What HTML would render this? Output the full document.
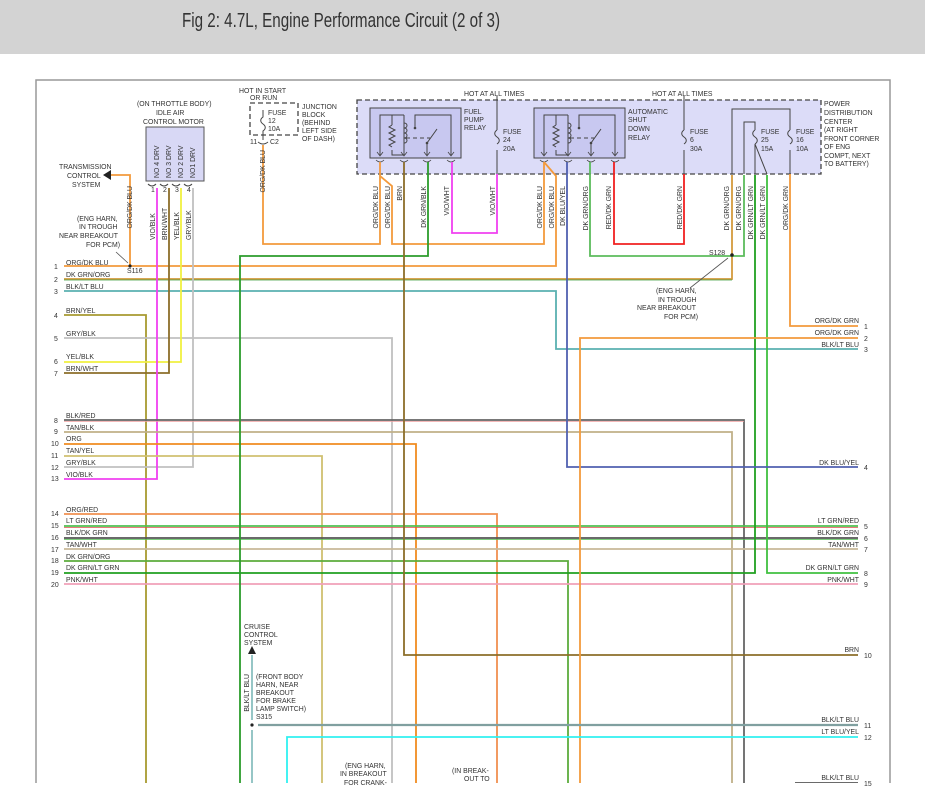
<!DOCTYPE html>
<html><head><meta charset="utf-8"><style>
html,body{margin:0;padding:0;background:#fff;}
body{width:925px;height:812px;overflow:hidden;position:relative;font-family:"Liberation Sans",sans-serif;}
.hdr{position:absolute;left:0;top:0;width:925px;height:54px;background:#d3d3d3;}
svg{position:absolute;left:0;top:0;}
text{font-family:"Liberation Sans",sans-serif;font-size:6.9px;fill:#333;}
</style></head><body>
<div class="hdr"></div>
<svg width="925" height="812" viewBox="0 0 925 812">
<text x="182" y="27" textLength="318" lengthAdjust="spacingAndGlyphs" style="font-size:20px;fill:#333">Fig 2: 4.7L, Engine Performance Circuit (2 of 3)</text>
<defs>
<clipPath id="c"><rect x="0" y="0" width="925" height="783"/></clipPath>
<g id="relay">
<rect x="370" y="108" width="91" height="50" fill="#c8c8f0" stroke="#444" stroke-width="1"/>
<path d="M380 155V115H404M392 115V125M392 150V155H404M404 115V155M415 128V115H451V155" fill="none" stroke="#444" stroke-width="1"/>
<path d="M392 125l-3 2 6 3-6 3 6 3-6 3 6 3-6 3 3 2" fill="none" stroke="#444" stroke-width="1"/>
<path d="M404 123c4 0 4 5 0 5c4 0 4 5 0 5c4 0 4 5 0 5c4 0 4 5 0 5" fill="none" stroke="#444" stroke-width="1"/>
<path d="M406 138H430" stroke="#444" stroke-width="1" stroke-dasharray="4,3"/>
<path d="M427 155V143L437 129" fill="none" stroke="#444" stroke-width="1"/>
<circle cx="415" cy="128" r="1.3" fill="#444"/><circle cx="427" cy="143" r="1.3" fill="#444"/>
<path d="M377 152l3 4 3-4M401 152l3 4 3-4M424 152l3 4 3-4M448 152l3 4 3-4" fill="none" stroke="#444" stroke-width="0.8"/>
<path d="M376 160q4 4 8 0M400 160q4 4 8 0M423 160q4 4 8 0M447 160q4 4 8 0" fill="none" stroke="#444" stroke-width="0.8"/>
</g>
</defs>
<path d="M36 783V80H890V783" fill="none" stroke="#999" stroke-width="1.5"/>
<rect x="357" y="100" width="464" height="74" fill="#dcdcf8" stroke="#444" stroke-width="1.3" stroke-dasharray="5,3"/>
<rect x="250" y="103" width="48" height="32" fill="#fff" stroke="#444" stroke-width="1.3" stroke-dasharray="5,3"/>
<rect x="146" y="127" width="58" height="54" fill="#d8d8f5" stroke="#555" stroke-width="1"/>
<use href="#relay"/>
<use href="#relay" transform="translate(164,0)"/>
<g fill="none" stroke="#444" stroke-width="1">
<path d="M497 96V130M497 150V174M497 130c-3 2-3 5 0 7c3 2 3 5 0 7"/>
<path d="M684 96V130M684 150V174M684 130c-3 2-3 5 0 7c3 2 3 5 0 7"/>
<path d="M732 174V109H790V130M790 150V174M790 130c-3 2-3 5 0 7c3 2 3 5 0 7"/>
<path d="M744 174V122H755V130M755 144L767 174M755 130c-3 2-3 5 0 7c3 2 3 5 0 7M755 144V174"/>
<path d="M263 110V117c-3 2-3 5 0 7c3 2 3 5 0 7V140"/>
<path d="M258 142q5 4 10 0"/>
<path d="M148 184q4 4 8 0M160 184q4 4 8 0M172 184q4 4 8 0M184 184q4 4 8 0"/>
</g>
<g clip-path="url(#c)" fill="none" stroke-width="1.8">
<path d="M64 266H556V176L544 162" stroke="#f39a3c"/>
<path d="M380 162V176M263 145V244H380V176" stroke="#f39a3c"/>
<path d="M380 176L392 186V244H544V162" stroke="#f39a3c"/>
<path d="M130 266V175H110" stroke="#f39a3c"/>
<path d="M64 279H732V175" stroke="#d49a3c"/>
<path d="M64 280H732" stroke="#3c9c3c" stroke-width="0.8"/>
<path d="M590 162V256H732M744 175V256H732" stroke="#5cbc5c"/>
<path d="M64 291H556V349H858" stroke="#5ab0b0"/>
<path d="M64 315H146V790" stroke="#a89a30"/>
<path d="M64 338H392V790" stroke="#c0c0c0"/>
<path d="M64 362H181V188" stroke="#f0f040"/>
<path d="M64 373H169V188" stroke="#8c6e2a"/>
<path d="M64 467H193V188" stroke="#c0c0c0"/>
<path d="M64 479H157V188" stroke="#f040f0"/>
<path d="M64 420H744V790" stroke="#666"/>
<path d="M64 421.5H744" stroke="#f0a0a0" stroke-width="0.8"/>
<path d="M64 432H732V790" stroke="#c0b088"/>
<path d="M64 444H416V790" stroke="#f08c20"/>
<path d="M64 456H322V790" stroke="#d0c070"/>
<path d="M64 514H497V790" stroke="#f09050"/>
<path d="M64 526H858" stroke="#50c050"/>
<path d="M64 527.5H858" stroke="#e05050" stroke-width="0.7"/>
<path d="M64 538H858" stroke="#555"/>
<path d="M64 539.5H858" stroke="#50c050" stroke-width="0.7"/>
<path d="M64 549H858" stroke="#c8b898"/>
<path d="M64 561H568V790" stroke="#5cac3c"/>
<path d="M64 573H755V175" stroke="#20a020"/>
<path d="M767 175V573H858" stroke="#40c040"/>
<path d="M64 584H858" stroke="#f0a0b8"/>
<path d="M428 162V256H240V790" stroke="#2c9c2c"/>
<path d="M404 162V655H858" stroke="#8c6e2a"/>
<path d="M452 162V233H497V174" stroke="#f040f0"/>
<path d="M567 162V467H858" stroke="#5060b0"/>
<path d="M614 162V244H684V174" stroke="#f02020"/>
<path d="M790 174V326H858" stroke="#f39a3c"/>
<path d="M580 790V338H858" stroke="#f39a3c"/>
<path d="M258 725H858" stroke="#80a0a0" stroke-width="2.2"/>
<path d="M252 655V720M252 730V790" stroke="#50a0a0" stroke-width="1.2"/>
<path d="M287 790V737H858" stroke="#30f0f0"/>
<path d="M795 783H858" stroke="#555"/>
</g>
<path d="M103 175l8-5v10z" fill="#222"/>
<path d="M252 646l-4 8h8z" fill="#222"/>
<circle cx="130" cy="266" r="1.6" fill="#222"/><circle cx="732" cy="255" r="1.8" fill="#222"/><circle cx="252" cy="725" r="1.6" fill="#222"/>
<path d="M116 252L128 263M690 288L728 258" stroke="#555" stroke-width="0.8"/>
<g>
<text x="137" y="106">(ON THROTTLE BODY)</text>
<text x="156" y="115">IDLE AIR</text>
<text x="143" y="124">CONTROL MOTOR</text>
<text x="239" y="93">HOT IN START</text>
<text x="250" y="100">OR RUN</text>
<text x="268" y="115">FUSE</text><text x="268" y="123">12</text><text x="268" y="131">10A</text>
<text x="250" y="144">11</text><text x="270" y="144">C2</text>
<text x="302" y="109">JUNCTION</text><text x="302" y="117">BLOCK</text><text x="302" y="125">(BEHIND</text><text x="302" y="133">LEFT SIDE</text><text x="302" y="141">OF DASH)</text>
<text x="59" y="169">TRANSMISSION</text><text x="67" y="178">CONTROL</text><text x="72" y="187">SYSTEM</text>
<text x="77" y="221">(ENG HARN,</text><text x="79" y="229">IN TROUGH</text><text x="59" y="238">NEAR BREAKOUT</text><text x="86" y="247">FOR PCM)</text>
<text x="127" y="273">S116</text>
<text x="464" y="96">HOT AT ALL TIMES</text>
<text x="652" y="96">HOT AT ALL TIMES</text>
<text x="464" y="114">FUEL</text><text x="464" y="122">PUMP</text><text x="464" y="130">RELAY</text>
<text x="628" y="114">AUTOMATIC</text><text x="628" y="122">SHUT</text><text x="628" y="131">DOWN</text><text x="628" y="140">RELAY</text>
<text x="503" y="134">FUSE</text><text x="503" y="142">24</text><text x="503" y="151">20A</text>
<text x="690" y="134">FUSE</text><text x="690" y="142">6</text><text x="690" y="151">30A</text>
<text x="761" y="134">FUSE</text><text x="761" y="142">25</text><text x="761" y="151">15A</text>
<text x="796" y="134">FUSE</text><text x="796" y="142">16</text><text x="796" y="151">10A</text>
<text x="824" y="106">POWER</text><text x="824" y="115">DISTRIBUTION</text><text x="824" y="124">CENTER</text><text x="824" y="132">(AT RIGHT</text><text x="824" y="141">FRONT CORNER</text><text x="824" y="149">OF ENG</text><text x="824" y="158">COMPT, NEXT</text><text x="824" y="166">TO BATTERY)</text>
<text x="709" y="255">S128</text>
<text x="656" y="293">(ENG HARN,</text><text x="658" y="302">IN TROUGH</text><text x="637" y="310">NEAR BREAKOUT</text><text x="664" y="319">FOR PCM)</text>
<text x="244" y="629">CRUISE</text><text x="244" y="637">CONTROL</text><text x="244" y="645">SYSTEM</text>
<text x="256" y="679">(FRONT BODY</text><text x="256" y="687">HARN, NEAR</text><text x="256" y="695">BREAKOUT</text><text x="256" y="703">FOR BRAKE</text><text x="256" y="711">LAMP SWITCH)</text><text x="256" y="719">S315</text>
<text x="345" y="768">(ENG HARN,</text><text x="340" y="776">IN BREAKOUT</text><text x="344" y="785">FOR CRANK-</text>
<text x="452" y="773">(IN BREAK-</text><text x="464" y="781">OUT TO</text>
<text x="151" y="192">1</text><text x="163" y="192">2</text><text x="175" y="192">3</text><text x="187" y="192">4</text>
</g>
<g>
<text x="54" y="269">1</text><text x="66" y="265">ORG/DK BLU</text>
<text x="54" y="282">2</text><text x="66" y="277">DK GRN/ORG</text>
<text x="54" y="294">3</text><text x="66" y="289">BLK/LT BLU</text>
<text x="54" y="318">4</text><text x="66" y="313">BRN/YEL</text>
<text x="54" y="341">5</text><text x="66" y="336">GRY/BLK</text>
<text x="54" y="364">6</text><text x="66" y="359">YEL/BLK</text>
<text x="54" y="376">7</text><text x="66" y="371">BRN/WHT</text>
<text x="54" y="423">8</text><text x="66" y="418">BLK/RED</text>
<text x="54" y="434">9</text><text x="66" y="430">TAN/BLK</text>
<text x="51" y="446">10</text><text x="66" y="441">ORG</text>
<text x="51" y="458">11</text><text x="66" y="453">TAN/YEL</text>
<text x="51" y="470">12</text><text x="66" y="465">GRY/BLK</text>
<text x="51" y="481">13</text><text x="66" y="477">VIO/BLK</text>
<text x="51" y="516">14</text><text x="66" y="512">ORG/RED</text>
<text x="51" y="528">15</text><text x="66" y="523">LT GRN/RED</text>
<text x="51" y="540">16</text><text x="66" y="535">BLK/DK GRN</text>
<text x="51" y="552">17</text><text x="66" y="547">TAN/WHT</text>
<text x="51" y="563">18</text><text x="66" y="559">DK GRN/ORG</text>
<text x="51" y="575">19</text><text x="66" y="570">DK GRN/LT GRN</text>
<text x="51" y="587">20</text><text x="66" y="582">PNK/WHT</text>
</g>
<g text-anchor="end">
<text x="859" y="323">ORG/DK GRN</text><text x="859" y="335">ORG/DK GRN</text><text x="859" y="347">BLK/LT BLU</text>
<text x="859" y="465">DK BLU/YEL</text><text x="859" y="523">LT GRN/RED</text><text x="859" y="535">BLK/DK GRN</text>
<text x="859" y="547">TAN/WHT</text><text x="859" y="570">DK GRN/LT GRN</text><text x="859" y="582">PNK/WHT</text>
<text x="859" y="652">BRN</text><text x="859" y="722">BLK/LT BLU</text><text x="859" y="734">LT BLU/YEL</text><text x="859" y="780">BLK/LT BLU</text>
</g>
<g>
<text x="864" y="329">1</text><text x="864" y="341">2</text><text x="864" y="352">3</text><text x="864" y="470">4</text>
<text x="864" y="529">5</text><text x="864" y="541">6</text><text x="864" y="552">7</text><text x="864" y="576">8</text><text x="864" y="587">9</text>
<text x="864" y="658">10</text><text x="864" y="728">11</text><text x="864" y="740">12</text><text x="864" y="786">15</text>
</g>
<g text-anchor="end">
<text transform="translate(132,186) rotate(-90)">ORG/DK BLU</text>
<text transform="translate(265,150) rotate(-90)">ORG/DK BLU</text>
<text transform="translate(378,186) rotate(-90)">ORG/DK BLU</text>
<text transform="translate(390,186) rotate(-90)">ORG/DK BLU</text>
<text transform="translate(402,186) rotate(-90)">BRN</text>
<text transform="translate(426,186) rotate(-90)">DK GRN/BLK</text>
<text transform="translate(449,186) rotate(-90)">VIO/WHT</text>
<text transform="translate(495,186) rotate(-90)">VIO/WHT</text>
<text transform="translate(542,186) rotate(-90)">ORG/DK BLU</text>
<text transform="translate(554,186) rotate(-90)">ORG/DK BLU</text>
<text transform="translate(565,186) rotate(-90)">DK BLU/YEL</text>
<text transform="translate(588,186) rotate(-90)">DK GRN/ORG</text>
<text transform="translate(611,186) rotate(-90)">RED/DK GRN</text>
<text transform="translate(682,186) rotate(-90)">RED/DK GRN</text>
<text transform="translate(729,186) rotate(-90)">DK GRN/ORG</text>
<text transform="translate(741,186) rotate(-90)">DK GRN/ORG</text>
<text transform="translate(753,186) rotate(-90)">DK GRN/LT GRN</text>
<text transform="translate(765,186) rotate(-90)">DK GRN/LT GRN</text>
<text transform="translate(788,186) rotate(-90)">ORG/DK GRN</text>
<text transform="translate(249,674) rotate(-90)">BLK/LT BLU</text>
</g>
<g text-anchor="start">
<text transform="translate(159,178) rotate(-90)">NO 4 DRV</text>
<text transform="translate(171,178) rotate(-90)">NO 3 DRV</text>
<text transform="translate(183,178) rotate(-90)">NO 2 DRV</text>
<text transform="translate(195,178) rotate(-90)">NO1 DRV</text>
<text transform="translate(155,240) rotate(-90)">VIO/BLK</text>
<text transform="translate(167,240) rotate(-90)">BRN/WHT</text>
<text transform="translate(179,240) rotate(-90)">YEL/BLK</text>
<text transform="translate(191,240) rotate(-90)">GRY/BLK</text>
</g>
</svg>
</body></html>
